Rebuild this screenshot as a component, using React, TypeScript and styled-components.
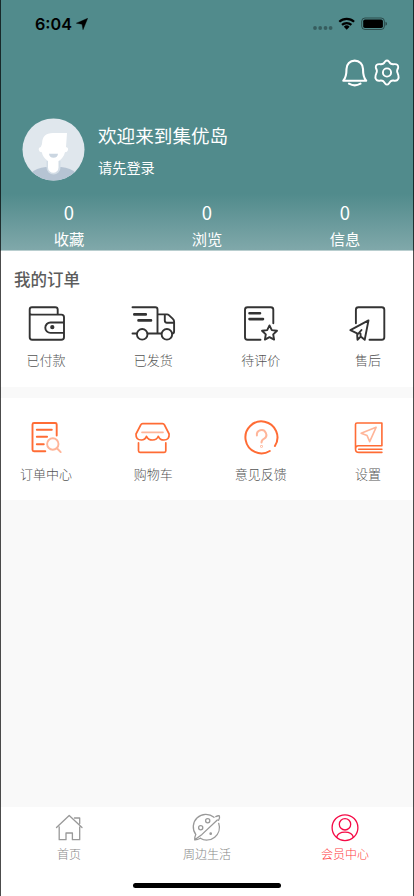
import React from "react";
import styled, { createGlobalStyle } from "styled-components";

const GlobalStyle = createGlobalStyle`
  * { box-sizing: border-box; }
  body { margin: 0; background: #f9f9f9; font-family: "Noto Sans CJK SC", sans-serif; }
  svg { display: block; flex: none; }
`;

const Screen = styled.div`
  position: relative;
  display: flex;
  flex-direction: column;
  width: 414px;
  height: 896px;
  overflow: hidden;
  background: #f9f9f9;
  &::after {
    content: "";
    position: absolute;
    inset: 0;
    border: solid rgba(0, 0, 0, 0.7);
    border-width: 0 1px;
    pointer-events: none;
  }
`;

const Header = styled.header`
  display: flex;
  flex-direction: column;
  height: 251px;
  flex: none;
  color: #fff;
  background: linear-gradient(#518b8c 0, #518b8c 194px, #80a8aa 250px, #b9cecf 250px);
`;

const StatusBar = styled.div`
  display: flex;
  align-items: center;
  justify-content: space-between;
  height: 48px;
  padding: 0 27px 0 35px;
  color: #000;
`;

const Clock = styled.div`
  display: flex;
  align-items: center;
  gap: 4px;
  font: 600 16.2px/20px Inter, sans-serif;
`;

const Actions = styled.div`
  display: flex;
  justify-content: flex-end;
  gap: 4px;
  height: 50px;
  padding: 11px 13px 0 0;
`;

const Profile = styled.div`
  display: flex;
  align-items: center;
  gap: 13px;
  height: 64px;
  margin-top: 21px;
  padding-left: 22px;
`;

const Welcome = styled.div`
  display: flex;
  flex-direction: column;
  gap: 7px;
`;

const Title = styled.div`
  font-size: 18.6px;
  line-height: 28px;
`;

const Hint = styled.div`
  font-size: 14.2px;
  line-height: 22px;
`;

const Stats = styled.div`
  display: grid;
  grid-template-columns: repeat(3, 1fr);
  margin-top: 18px;
`;

const Stat = styled.div`
  display: flex;
  flex-direction: column;
  align-items: center;
  font-size: 15.3px;
  line-height: 25px;
  b { font-size: 18.5px; font-weight: 400; line-height: 27px; }
`;

const Panel = styled.section<{ $height: number; $gap: number }>`
  display: flex;
  flex-direction: column;
  flex: none;
  height: ${(p) => p.$height}px;
  margin-bottom: ${(p) => p.$gap}px;
  background: #fff;
`;

const PanelTitle = styled.h2`
  margin: 0;
  padding: 14px 14px 0;
  height: 50px;
  color: #5c5c5c;
  font-size: 16.5px;
  font-weight: 500;
  line-height: 28px;
`;

const Entries = styled.div<{ $top?: number }>`
  display: flex;
  justify-content: space-between;
  padding: ${(p) => p.$top ?? 0}px 20px 0;
`;

const Entry = styled.div`
  display: flex;
  flex-direction: column;
  align-items: center;
  width: 52px;
  gap: 5px;
  color: #555;
  font-size: 13px;
  font-weight: 300;
  line-height: 20px;
  white-space: nowrap;
`;

const TabBar = styled.nav`
  position: relative;
  display: grid;
  grid-template-columns: repeat(3, 1fr);
  height: 89px;
  margin-top: auto;
  padding-top: 5px;
  background: #fff;
`;

const Tab = styled.div<{ $active?: boolean }>`
  display: flex;
  flex-direction: column;
  align-items: center;
  gap: 1px;
  color: ${(p) => (p.$active ? "#ff3a40" : "#888")};
  font-size: 12px;
  font-weight: 300;
  line-height: 18px;
`;

const HomeIndicator = styled.div`
  position: absolute;
  left: 133px;
  bottom: 8px;
  width: 148px;
  height: 5px;
  border-radius: 3px;
  background: #000;
`;

type IconProps = { children: React.ReactNode; color?: string; width?: number };

const EntryIcon = ({ children, color = "#333", width = 1.9 }: IconProps) => (
  <svg width="44" height="44" viewBox="0.5 0 44 44" overflow="visible" fill="none" stroke={color} strokeWidth={width} strokeLinecap="round" strokeLinejoin="round">
    {children}
  </svg>
);

const TabIcon = ({ children, color = "#999" }: IconProps) => (
  <svg width="32" height="32" viewBox="0 0 32 32" fill="none" stroke={color} strokeWidth="1.3" strokeLinecap="round" strokeLinejoin="round">
    {children}
  </svg>
);

const ORANGE = "#ff6c35";
const PEACH = "#ffb599";

const orders = [
  {
    label: "已付款",
    icon: (
      <EntryIcon>
        <path d="M6.2 14V8.5q0-2.3 2.3-2.3h23.2q2.5 0 2.5 2.4v5M6.2 14v22.3q0 2.5 2.5 2.5h29q2.8 0 2.8-2.5V16.2q0-2.6-2.6-2.6H8.4q-2.2 0-2.2-1.6M40.5 21.5H27a5.2 5.2 0 0 0 0 10.4h13.5" />
        <circle cx="28.8" cy="26.2" r="1.2" fill="#333" />
      </EntryIcon>
    ),
  },
  {
    label: "已发货",
    icon: (
      <EntryIcon>
        <path d="M2 6.2h22.8q2.2 0 2.2 2.2v24.1M27 13.4h9.6q1 0 1.8.7l4 3.8q1.2 1 1.2 2.5v10q0 2.1-2 2.1M34.3 13.6v6q0 2.2 2.2 2.2h7M2 32.5h4M17 32.5h13.8" />
        <path d="M3.8 13.4h11.5M8 19.4h12.5" strokeWidth="2.6" />
        <circle cx="11.7" cy="33.3" r="5.3" />
        <circle cx="36.4" cy="33.3" r="5.3" />
      </EntryIcon>
    ),
  },
  {
    label: "待评价",
    icon: (
      <EntryIcon>
        <path d="M34.8 22.2V8.7q0-2.5-2.5-2.5H9q-2.5 0-2.5 2.5v27.5q0 2.5 2.5 2.5h13M31 24.4l2.3 4.7 5.2.7-3.8 3.6.9 5.2-4.6-2.5-4.6 2.5.9-5.2-3.8-3.6 5.2-.7z" />
        <path d="M11 12.2h10.5M11 18.1h13.5" strokeWidth="2.6" />
      </EntryIcon>
    ),
  },
  {
    label: "售后",
    icon: (
      <EntryIcon>
        <path d="M10.4 22.2V8.7q0-2.5 2.5-2.5h23.4q2.5 0 2.5 2.5v27.5q0 2.5-2.5 2.5H24M23 19.4 4.900 29.2l6.700 3.2.4 6.300 3.2-3.100 4 3.2zM16 29l-3.100 3.700M15.200 35.600l-.2-3" />
      </EntryIcon>
    ),
  },
];

const services = [
  {
    label: "订单中心",
    icon: (
      <EntryIcon color={ORANGE}>
        <path d="M33.2 20.5v-11q0-1.5-1.5-1.5H10.5Q9 8 9 9.5v25.3q0 1.5 1.5 1.5h11.3M13.3 14.7h15M13.3 21.8h10.3M13.3 29.2h7" />
        <g stroke={PEACH}><circle cx="29.3" cy="29" r="5.7" /><path d="m33.7 33.5 3.5 3.6" /></g>
      </EntryIcon>
    ),
  },
  {
    label: "购物车",
    icon: (
      <EntryIcon color={ORANGE} width={1.7}>
        <path d="M10.2 10q.6-1.400 2-1.400h19.800q1.400 0 2 1.400l4.600 9q.5 6-5.200 6-4 0-5.600-3.700Q26.300 25 22 25q-4.200 0-6-3.700Q14.800 25 10.800 25 5.200 25 5.500 19zM8 27.800v8q0 1.500 1.500 1.500h24.300q1.500 0 1.500-1.500v-8" />
        <path d="M11.500 17.300h21" stroke={PEACH} />
      </EntryIcon>
    ),
  },
  {
    label: "意见反馈",
    icon: (
      <EntryIcon color={ORANGE} width={2}>
        <path d="M36.400 31A16 16 0 1 0 31.300 36" />
        <g stroke={PEACH}><path d="M18.400 20.400a4.700 4.700 0 1 1 7.300 3.300Q23 25 23 27.500" /><circle cx="23" cy="31.400" r=".4" /></g>
      </EntryIcon>
    ),
  },
  {
    label: "设置",
    icon: (
      <EntryIcon color={ORANGE} width={1.6}>
        <path d="M36.400 30.800V8H11.500Q10 8 10 9.500v24.400q0 3.500 3.500 3.500h22.900M10 33.900q0-3.100 3-3.100h23.400M36.400 34.200H13.200" />
        <path d="m30.600 12.300-15 6 6 2.300 2.600 6z" stroke={PEACH} />
      </EntryIcon>
    ),
  },
];

const tabs = [
  {
    label: "首页",
    icon: <TabIcon><path d="M3.500 15.500 16.200 3.500 29 15.500M6.200 14.800v12.900H13V21h6.400v6.700h7.300V14.800M21.500 6h5.200v5.500" /></TabIcon>,
  },
  {
    label: "周边生活",
    icon: (
      <TabIcon>
        <path d="M23 5.300A12.600 12.600 0 0 0 4.800 22.500Q3.300 25.500 3.700 27.800L11 22.400 26.300 8M9.300 26.200A12.600 12.600 0 0 0 27.700 11.300M3.700 27.800q2.500.2 5.600-1.600M24.800 4.600q2.300-1.200 3.600-.7.700 1.800-.9 4.400" />
        <circle cx="16.700" cy="8.700" r="2.100" /><circle cx="9.700" cy="15.700" r="2.100" /><circle cx="19.700" cy="21.700" r=".7" />
      </TabIcon>
    ),
  },
  {
    label: "会员中心",
    active: true,
    icon: <TabIcon color="#f50a46"><circle cx="16" cy="15.700" r="12.900" /><circle cx="16" cy="12.300" r="5.700" /><path d="M7.600 25.400C9.200 18.400 22.800 18.400 24.400 25.400" /></TabIcon>,
  },
];

const stats = [["收藏", 0], ["浏览", 0], ["信息", 0]];

const Avatar = () => (
  <svg width="63" height="63" viewBox="0 0 63 63">
    <defs><clipPath id="avatar"><circle cx="31.500" cy="31.500" r="31" /></clipPath></defs>
    <g clipPath="url(#avatar)">
      <path fill="#e0e7ed" d="M0 0h63v63H0z" />
      <path fill="#b6c4d3" d="M9 55q5-5 15-6h15q10 1 15 6v8H9z" />
      <path fill="#d3dde6" d="M24.500 43h14v6.500a7 7 0 0 1-14 0z" />
      <path fill="#fff" d="M20 26q0-11 11-11h14l-1 14q2.500.5 2 3-.5 2.300-3 2.300-1.500 6-6.500 8.700v6.500a5.200 5.200 0 0 1-10.500 0V43q-5-3-6.200-8.700-2.500 0-3-2.300-.5-2.500 2-3z" />
      <path fill="#cbd6e1" d="M27 35.800h9q-.4 4-4.500 4t-4.500-4z" />
    </g>
  </svg>
);

export default function App() {
  return (
    <Screen>
      <GlobalStyle />
      <Header>
        <StatusBar>
          <Clock>
            6:04
            <svg width="12" height="12" viewBox="0 0 12 12"><path d="M11.700.3 7 11.700 6 6.200.3 5.200z" stroke="#000" strokeWidth=".4" strokeLinejoin="round" /></svg>
          </Clock>
          <svg width="75" height="16" viewBox="0 0 75 16">
            <g fill="#000" opacity=".32"><circle cx="3" cy="12" r="1.900" /><circle cx="8.200" cy="12" r="1.900" /><circle cx="13.500" cy="12" r="1.900" /><circle cx="18.600" cy="12" r="1.900" /></g>
            <g fill="none" stroke="#000" strokeWidth="2.200"><path d="M27.300 5.800a10.800 10.800 0 0 1 14.800 0M30 8.900a7 7 0 0 1 9.400 0" /></g>
            <path d="m31.800 10.700 2.900 3 2.900-3a4.200 4.200 0 0 0-5.800 0z" />
            <rect x="49.700" y="2" width="22.700" height="11.500" rx="3.300" fill="none" stroke="#000" strokeOpacity=".45" />
            <rect x="51.200" y="3.500" width="19.700" height="8.500" rx="1.800" /><path d="M73.500 5.800q1.500.3 1.500 2t-1.500 2z" opacity=".5" />
          </svg>
        </StatusBar>
        <Actions>
          <svg width="28" height="30" viewBox="0 0 28 30" fill="none" stroke="#fff" strokeWidth="2.100" strokeLinecap="round" strokeLinejoin="round">
            <path d="M2.300 22.700Q5.500 19 5.500 11C5.500 6 9 2.600 13.700 2.600S22 6 22 11q0 8 3.200 11.700z" /><path d="M8 25.700q5.700 3.300 11.500 0" />
          </svg>
          <svg width="28" height="30" viewBox="0 0 28 30" fill="none" stroke="#fff" strokeWidth="1.900" strokeLinejoin="round">
            <path d="M12 3.600q2-2.200 4 0 1.700 3.300 5.300 2.500 4.200-.3 3.900 3.700-1.900 3.200-.5 5.500 2 4.500-.4 6.800-1.300.9-4 .4-2.500-.3-4.300 2.900-2 2.400-4 0-1.800-3.200-4.300-2.900-2.700.5-4-.4Q1.300 19.800 3.300 15.300q1.400-2.300-.5-5.500-.3-4 3.900-3.700Q10.300 6.900 12 3.600z" />
            <circle cx="14" cy="14.500" r="4.100" />
          </svg>
        </Actions>
        <Profile>
          <Avatar />
          <Welcome><Title>欢迎来到集优岛</Title><Hint>请先登录</Hint></Welcome>
        </Profile>
        <Stats>
          {stats.map(([label, count]) => <Stat key={label}><b>{count}</b>{label}</Stat>)}
        </Stats>
      </Header>
      <Panel $height={136} $gap={11}>
        <PanelTitle>我的订单</PanelTitle>
        <Entries>{orders.map((e) => <Entry key={e.label}>{e.icon}{e.label}</Entry>)}</Entries>
      </Panel>
      <Panel $height={102} $gap={0}>
        <Entries $top={17}>{services.map((e) => <Entry key={e.label}>{e.icon}{e.label}</Entry>)}</Entries>
      </Panel>
      <TabBar>
        {tabs.map((t) => <Tab key={t.label} $active={t.active}>{t.icon}{t.label}</Tab>)}
        <HomeIndicator />
      </TabBar>
    </Screen>
  );
}
